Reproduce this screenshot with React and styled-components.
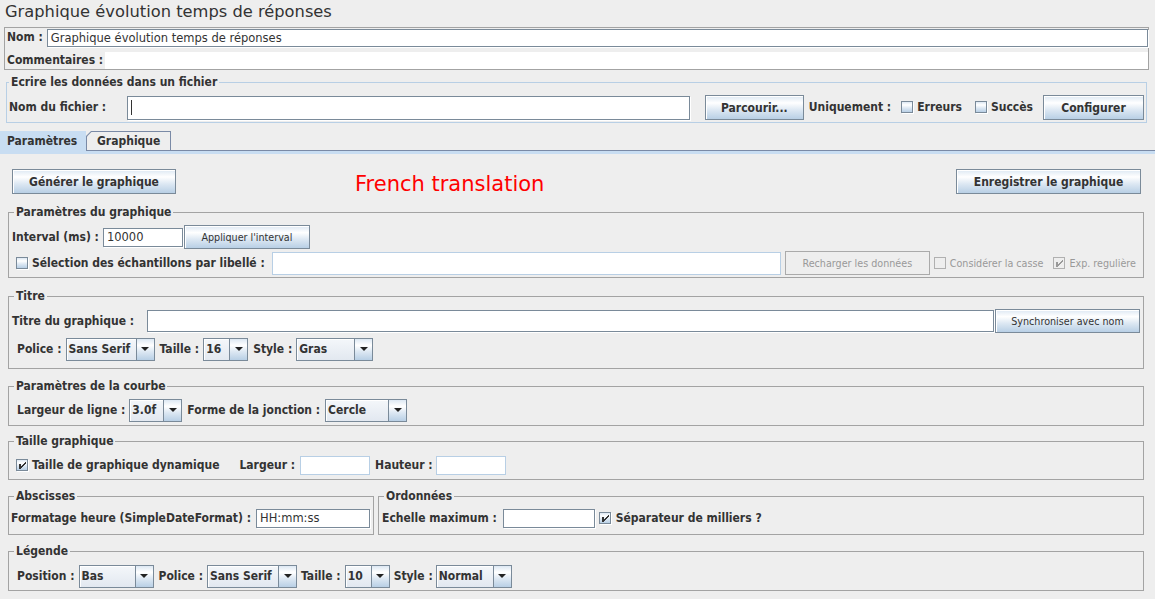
import React from "react";
import styled, { createGlobalStyle } from "styled-components";

const COND = `"DejaVu Sans Condensed", "DejaVu Sans", "Liberation Sans", sans-serif`;
const SANS = `"DejaVu Sans", "Liberation Sans", sans-serif`;
const INK = "#333333";
const EDGE = "#7a8a99";
const SOFT = "#b8cfe5";
const OCEAN = "linear-gradient(to bottom, #dde8f3 0%, #ffffff 30%, #dde8f3 60%, #b8cfe5 100%)";

const GlobalStyle = createGlobalStyle`
  html, body {
    margin: 0;
    padding: 0;
    background: #eeeeee;
  }
  body {
    font-family: ${SANS};
    color: ${INK};
  }
`;

const Screen = styled.div`
  width: 1155px;
  height: 599px;
  overflow: hidden;
  background: #eeeeee;
`;

const TitleBar = styled.div`
  box-sizing: border-box;
  height: 27px;
  padding: 2px 0 0 5px;
  font-family: ${SANS};
  font-size: 16.3px;
  line-height: 20px;
  color: ${INK};
  white-space: nowrap;
`;

const NameBox = styled.div`
  margin: 0 6px 0 4px;
  border: 1px solid #a3a3a3;
  padding: 0 0 0 2px;
`;

const NameRow = styled.div`
  display: flex;
  align-items: center;
  height: 19px;
`;

const CommentRow = styled.div`
  display: flex;
  align-items: flex-end;
  height: 22px;
`;

const CommentArea = styled.div`
  flex: 1;
  height: 17px;
  background: #ffffff;
  margin-left: 2px;
`;

const Label = styled.span`
  flex: 0 0 auto;
  margin-left: ${(p) => p.$ml || 0}px;
  font-family: ${COND};
  font-weight: bold;
  font-size: 12px;
  line-height: 17px;
  color: ${INK};
  white-space: nowrap;
`;

const SmallText = styled.span`
  flex: 0 0 auto;
  margin-left: ${(p) => p.$ml || 0}px;
  margin-right: ${(p) => p.$mr || 0}px;
  font-family: ${SANS};
  font-size: 9.6px;
  color: ${(p) => (p.$disabled ? "#999999" : INK)};
  white-space: nowrap;
`;

const Field = styled.div`
  box-sizing: border-box;
  display: flex;
  align-items: center;
  flex: ${(p) => (p.$w ? `0 0 ${p.$w}px` : "1 1 auto")};
  min-width: 0;
  height: ${(p) => p.$h || 19}px;
  margin-left: ${(p) => p.$ml || 0}px;
  margin-right: ${(p) => p.$mr || 0}px;
  padding: 0 3px;
  background: #ffffff;
  border: 1px solid ${(p) => (p.$soft ? SOFT : EDGE)};
  box-shadow: ${(p) => (p.$soft ? "none" : "1px 1px 0 #ffffff")};
  font-family: ${SANS};
  font-size: 11.5px;
  color: ${INK};
  white-space: nowrap;
  overflow: hidden;
`;

const Caret = styled.span`
  display: block;
  width: 1px;
  height: 15px;
  background: #333333;
`;

const Button = styled.button`
  box-sizing: border-box;
  flex: 0 0 ${(p) => p.$w}px;
  height: ${(p) => p.$h || 25}px;
  margin: 0 ${(p) => p.$mr || 0}px 0 ${(p) => p.$ml || 0}px;
  padding: 0;
  border: 1px solid ${(p) => (p.disabled ? "#aaaaaa" : EDGE)};
  border-radius: 0;
  background: ${(p) => (p.disabled ? "#eeeeee" : OCEAN)};
  box-shadow: ${(p) => (p.disabled ? "none" : "inset 1px 1px 0 #ffffff")};
  font-family: ${(p) => (p.$small ? SANS : COND)};
  font-weight: ${(p) => (p.$small ? "normal" : "bold")};
  font-size: ${(p) => (p.$small ? "9.6px" : "12px")};
  color: ${(p) => (p.disabled ? "#999999" : INK)};
  white-space: nowrap;
`;

const ComboFrame = styled.div`
  box-sizing: border-box;
  display: flex;
  flex: 0 0 ${(p) => p.$w}px;
  height: 23px;
  margin-left: ${(p) => p.$ml || 0}px;
  border: 1px solid ${EDGE};
`;

const ComboValue = styled.div`
  flex: 1;
  display: flex;
  align-items: center;
  padding-left: 2px;
  background: linear-gradient(to bottom, #f4f7fa, #e2e8f0);
  box-shadow: inset 1px 1px 0 #ffffff;
  font-family: ${COND};
  font-weight: bold;
  font-size: 12px;
  color: ${INK};
  white-space: nowrap;
  overflow: hidden;
`;

const ComboArrow = styled.div`
  flex: 0 0 17px;
  display: flex;
  align-items: center;
  justify-content: center;
  border-left: 1px solid ${EDGE};
  background: ${OCEAN};
  &::after {
    content: "";
    border-left: 4px solid transparent;
    border-right: 4px solid transparent;
    border-top: 4px solid #222222;
  }
`;

const CheckFrame = styled.span`
  box-sizing: border-box;
  flex: 0 0 12px;
  display: inline-flex;
  width: 12px;
  height: 12px;
  margin: 0 0 1px ${(p) => p.$ml || 0}px;
  border: 1px solid ${(p) => (p.$disabled ? "#b0b0b0" : EDGE)};
  background: ${(p) => (p.$disabled ? "#eeeeee" : OCEAN)};
  box-shadow: ${(p) => (p.$disabled ? "none" : "1px 1px 0 #ffffff")};
`;

const Group = styled.fieldset`
  box-sizing: border-box;
  min-width: 0;
  flex: ${(p) => (p.$w ? `0 0 ${p.$w}px` : "1 1 auto")};
  margin: ${(p) => p.$mt || 0}px 0 0 0;
  padding: ${(p) => p.$pt || 0}px 2px ${(p) => p.$pb || 0}px ${(p) => p.$pl || 3}px;
  border: 1px solid ${(p) => (p.$accent ? SOFT : "#a3a3a3")};
`;

const GroupTitle = styled.legend`
  margin-left: ${(p) => p.$ml || 0}px;
  padding: 0 2px;
  font-family: ${COND};
  font-weight: bold;
  font-size: 12px;
  line-height: 12px;
  color: ${INK};
`;

const FileGroup = styled(Group)`
  margin: 6px 8px 0 6px;
`;

const Row = styled.div`
  display: flex;
  align-items: center;
  height: ${(p) => p.$h || 24}px;
  margin-top: ${(p) => p.$mt || 0}px;
`;

const TabStrip = styled.div`
  display: flex;
  align-items: flex-end;
  height: 19px;
  margin-top: 8px;
  border-bottom: 1px solid #7a8aa6;
`;

const ActiveTab = styled.div`
  box-sizing: border-box;
  width: 86px;
  height: 20px;
  margin-bottom: -1px;
  padding: 3px 0 0 7px;
  background: #c8ddf2;
  font-family: ${COND};
  font-weight: bold;
  font-size: 12px;
  color: ${INK};
  white-space: nowrap;
`;

const TabEdge = styled.div`
  box-sizing: border-box;
  width: 85px;
  height: 19px;
  padding: 1px 1px 0 1px;
  background: #7a8aa6;
  clip-path: polygon(5px 0, 100% 0, 100% 100%, 0 100%, 0 5px);
`;

const TabFace = styled.div`
  height: 100%;
  padding: 2px 0 0 10px;
  box-sizing: border-box;
  background: #eeeeee;
  clip-path: polygon(4.5px 0, 100% 0, 100% 100%, 0 100%, 0 4.5px);
  font-family: ${COND};
  font-weight: bold;
  font-size: 12px;
  color: ${INK};
  white-space: nowrap;
`;

const TabBand = styled.div`
  height: 3px;
  background: #c8ddf2;
`;

const TabBody = styled.div`
  display: flex;
  flex-direction: column;
  padding: 15px 11px 0 8px;
`;

const ActionRow = styled.div`
  display: flex;
  align-items: flex-start;
  height: 25px;
`;

const Note = styled.span`
  margin-left: 179px;
  padding-top: 3px;
  font-family: ${SANS};
  font-size: 21px;
  line-height: 24px;
  color: #ff0000;
  white-space: nowrap;
`;

const Spacer = styled.div`
  flex: 1;
`;

const AxisRow = styled.div`
  display: flex;
  gap: 4px;
  margin-top: 10px;
`;

function CheckBox({ checked, disabled, ml }) {
  return (
    <CheckFrame $ml={ml} $disabled={disabled}>
      {checked && (
        <svg width="10" height="10" viewBox="1 1 10 10" shapeRendering="crispEdges">
          <g fill={disabled ? "#999999" : "#333333"}>
            <rect x="3" y="5" width="2" height="5" />
            <polygon points="9,3 10,3 10,5 9,5 9,6 8,6 8,7 7,7 7,8 6,8 6,9 5,9 5,7 6,7 6,6 7,6 7,5 8,5 8,4 9,4" />
          </g>
        </svg>
      )}
    </CheckFrame>
  );
}

function Combo({ value, w, ml }) {
  return (
    <ComboFrame $w={w} $ml={ml}>
      <ComboValue>{value}</ComboValue>
      <ComboArrow />
    </ComboFrame>
  );
}

export default function App() {
  return (
    <>
      <GlobalStyle />
      <Screen>
        <TitleBar>Graphique évolution temps de réponses</TitleBar>

        <NameBox>
          <NameRow>
            <Label>Nom :</Label>
            <Field $h={18} $ml={4}>Graphique évolution temps de réponses</Field>
          </NameRow>
          <CommentRow>
            <Label>Commentaires :</Label>
            <CommentArea />
          </CommentRow>
        </NameBox>

        <FileGroup $accent $pt={7} $pb={2} $pl={2}>
          <GroupTitle>Ecrire les données dans un fichier</GroupTitle>
          <Row $h={25}>
            <Label>Nom du fichier :</Label>
            <Field $h={24} $ml={21}>
              <Caret />
            </Field>
            <Button $w={99} $ml={15}>Parcourir...</Button>
            <Label $ml={5}>Uniquement :</Label>
            <CheckBox ml={10} />
            <Label $ml={4}>Erreurs</Label>
            <CheckBox ml={13} />
            <Label $ml={4}>Succès</Label>
            <Button $w={101} $ml={10}>Configurer</Button>
          </Row>
        </FileGroup>

        <TabStrip>
          <ActiveTab>Paramètres</ActiveTab>
          <TabEdge>
            <TabFace>Graphique</TabFace>
          </TabEdge>
        </TabStrip>
        <TabBand />

        <TabBody>
          <ActionRow>
            <Button $w={164} $ml={4}>Générer le graphique</Button>
            <Note>French translation</Note>
            <Spacer />
            <Button $w={185} $mr={3}>Enregistrer le graphique</Button>
          </ActionRow>

          <Group $mt={12} $pt={7} $pb={2}>
            <GroupTitle $ml={2}>Paramètres du graphique</GroupTitle>
            <Row>
              <Label>Interval (ms) :</Label>
              <Field $w={80} $h={19} $ml={4}>10000</Field>
              <Button $small $w={126} $h={24} $ml={1}>Appliquer l'interval</Button>
            </Row>
            <Row $mt={2}>
              <CheckBox ml={4} />
              <Label $ml={4}>Sélection des échantillons par libellé :</Label>
              <Field $soft $h={23} $ml={7} />
              <Button $small disabled $w={145} $h={24} $ml={4}>Recharger les données</Button>
              <CheckBox disabled ml={4} />
              <SmallText $disabled $ml={4}>Considérer la casse</SmallText>
              <CheckBox checked disabled ml={10} />
              <SmallText $disabled $ml={4} $mr={5}>Exp. regulière</SmallText>
            </Row>
          </Group>

          <Group $mt={12} $pt={7} $pb={7}>
            <GroupTitle $ml={2}>Titre</GroupTitle>
            <Row>
              <Label>Titre du graphique :</Label>
              <Field $h={22} $ml={13} />
              <Button $small $w={145} $h={24} $ml={1} $mr={1}>Synchroniser avec nom</Button>
            </Row>
            <Row $mt={4}>
              <Label $ml={5}>Police :</Label>
              <Combo w={89} ml={4} value="Sans Serif" />
              <Label $ml={5}>Taille :</Label>
              <Combo w={45} ml={4} value="16" />
              <Label $ml={5}>Style :</Label>
              <Combo w={77} ml={4} value="Gras" />
            </Row>
          </Group>

          <Group $mt={11} $pt={6} $pb={3}>
            <GroupTitle $ml={2}>Paramètres de la courbe</GroupTitle>
            <Row>
              <Label $ml={5}>Largeur de ligne :</Label>
              <Combo w={53} ml={4} value="3.0f" />
              <Label $ml={5}>Forme de la jonction :</Label>
              <Combo w={82} ml={5} value="Cercle" />
            </Row>
          </Group>

          <Group $mt={9} $pt={6} $pb={2}>
            <GroupTitle $ml={2}>Taille graphique</GroupTitle>
            <Row>
              <CheckBox checked ml={4} />
              <Label $ml={4}>Taille de graphique dynamique</Label>
              <Label $ml={20}>Largeur :</Label>
              <Field $soft $w={70} $h={19} $ml={5} />
              <Label $ml={5}>Hauteur :</Label>
              <Field $soft $w={70} $h={19} $ml={3} />
            </Row>
          </Group>

          <AxisRow>
            <Group $w={366} $pt={4} $pb={4} $pl={2}>
              <GroupTitle $ml={3}>Abscisses</GroupTitle>
              <Row>
                <Label>Formatage heure (SimpleDateFormat) :</Label>
                <Field $w={114} $h={19} $ml={5}>HH:mm:ss</Field>
              </Row>
            </Group>
            <Group $pt={4} $pb={4}>
              <GroupTitle $ml={2}>Ordonnées</GroupTitle>
              <Row>
                <Label>Echelle maximum :</Label>
                <Field $w={92} $h={19} $ml={6} />
                <CheckBox checked ml={4} />
                <Label $ml={5}>Séparateur de milliers ?</Label>
              </Row>
            </Group>
          </AxisRow>

          <Group $mt={10} $pt={7} $pb={2}>
            <GroupTitle $ml={2}>Légende</GroupTitle>
            <Row>
              <Label $ml={5}>Position :</Label>
              <Combo w={75} ml={4} value="Bas" />
              <Label $ml={5}>Police :</Label>
              <Combo w={90} ml={4} value="Sans Serif" />
              <Label $ml={4}>Taille :</Label>
              <Combo w={45} ml={4} value="10" />
              <Label $ml={4}>Style :</Label>
              <Combo w={76} ml={3} value="Normal" />
            </Row>
          </Group>
        </TabBody>
      </Screen>
    </>
  );
}
